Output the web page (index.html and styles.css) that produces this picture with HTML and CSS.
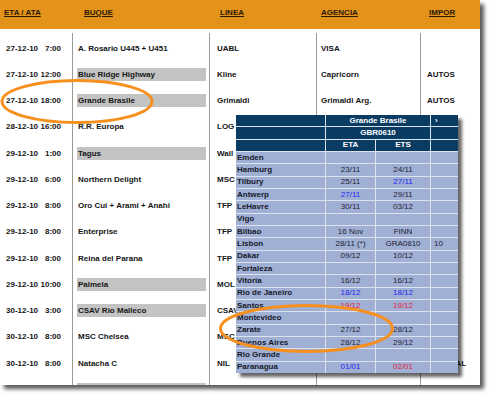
FILE: index.html
```html
<!DOCTYPE html>
<html>
<head>
<meta charset="utf-8">
<link rel="stylesheet" href="styles.css">
</head>
<body>
<div class="page">
  <div class="panel">
    <div class="head">
      <div class="hc w1 h1"><span class="ul">ETA / ATA</span></div>
      <div class="hc w2 h2"><span class="ul">BUQUE</span></div>
      <div class="hc w3 h3"><span class="ul">LINEA</span></div>
      <div class="hc w4 h4"><span class="ul">AGENCIA</span></div>
      <div class="hc w5 h5"><span class="ul">IMPOR</span></div>
    </div>
    <div class="body">
      <div class="col w1 cdate">
        <div class="cell"><span>27-12-10</span><span>7:00</span></div>
        <div class="cell"><span>27-12-10</span><span>12:00</span></div>
        <div class="cell"><span>27-12-10</span><span>18:00</span></div>
        <div class="cell"><span>28-12-10</span><span>16:00</span></div>
        <div class="cell"><span>29-12-10</span><span>1:00</span></div>
        <div class="cell"><span>29-12-10</span><span>6:00</span></div>
        <div class="cell"><span>29-12-10</span><span>8:00</span></div>
        <div class="cell"><span>29-12-10</span><span>8:00</span></div>
        <div class="cell"><span>29-12-10</span><span>8:00</span></div>
        <div class="cell"><span>29-12-10</span><span>10:00</span></div>
        <div class="cell"><span>30-12-10</span><span>3:00</span></div>
        <div class="cell"><span>30-12-10</span><span>8:00</span></div>
        <div class="cell"><span>30-12-10</span><span>8:00</span></div>
        <div class="cell"></div>
      </div>
      <div class="col w2 cship">
        <div class="cell"><span class="nm">A. Rosario U445 + U451</span></div>
        <div class="cell"><span class="nm hl">Blue Ridge Highway</span></div>
        <div class="cell"><span class="nm hl">Grande Brasile</span></div>
        <div class="cell"><span class="nm">R.R. Europa</span></div>
        <div class="cell"><span class="nm hl">Tagus</span></div>
        <div class="cell"><span class="nm">Northern Delight</span></div>
        <div class="cell"><span class="nm">Oro Cui + Arami + Anahi</span></div>
        <div class="cell"><span class="nm">Enterprise</span></div>
        <div class="cell"><span class="nm">Reina del Parana</span></div>
        <div class="cell"><span class="nm hl">Palmela</span></div>
        <div class="cell"><span class="nm hl">CSAV Rio Malleco</span></div>
        <div class="cell"><span class="nm">MSC Chelsea</span></div>
        <div class="cell"><span class="nm">Natacha C</span></div>
        <div class="cell"><span class="nm hl"></span></div>
      </div>
      <div class="col w3 cline">
        <div class="cell">UABL</div>
        <div class="cell">Kline</div>
        <div class="cell">Grimaldi</div>
        <div class="cell">LOG</div>
        <div class="cell">Wall</div>
        <div class="cell">MSC</div>
        <div class="cell">TFP</div>
        <div class="cell">TFP</div>
        <div class="cell">TFP</div>
        <div class="cell">MOL</div>
        <div class="cell">CSAV</div>
        <div class="cell">MSC</div>
        <div class="cell">NIL</div>
        <div class="cell"></div>
      </div>
      <div class="col w4 cagen">
        <div class="cell">VISA</div>
        <div class="cell">Capricorn</div>
        <div class="cell">Grimaldi Arg.</div>
        <div class="cell"></div>
        <div class="cell"></div>
        <div class="cell"></div>
        <div class="cell"></div>
        <div class="cell"></div>
        <div class="cell"></div>
        <div class="cell"></div>
        <div class="cell"></div>
        <div class="cell"></div>
        <div class="cell"></div>
        <div class="cell"></div>
      </div>
      <div class="col w5 cimp">
        <div class="cell"></div>
        <div class="cell">AUTOS</div>
        <div class="cell">AUTOS</div>
        <div class="cell"></div>
        <div class="cell"></div>
        <div class="cell"></div>
        <div class="cell"></div>
        <div class="cell"></div>
        <div class="cell"></div>
        <div class="cell"></div>
        <div class="cell"></div>
        <div class="cell"></div>
        <div class="cell">GENERAL</div>
        <div class="cell"></div>
      </div>
    </div>
  </div>

  <div class="popup">
    <div class="ph"></div><div class="ph span2">Grande Brasile</div><div class="ph arr">&#8250;</div>
    <div class="ph"></div><div class="ph span2">GBR0610</div><div class="ph"></div>
    <div class="ph"></div><div class="ph">ETA</div><div class="ph">ETS</div><div class="ph"></div>

    <div class="pn">Emden</div><div class="pv"></div><div class="pv"></div><div class="pv"></div>
    <div class="pn">Hamburg</div><div class="pv">23/11</div><div class="pv">24/11</div><div class="pv"></div>
    <div class="pn">Tilbury</div><div class="pv">25/11</div><div class="pv blue">27/11</div><div class="pv"></div>
    <div class="pn">Antwerp</div><div class="pv blue">27/11</div><div class="pv">29/11</div><div class="pv"></div>
    <div class="pn">LeHavre</div><div class="pv">30/11</div><div class="pv">03/12</div><div class="pv"></div>
    <div class="pn">Vigo</div><div class="pv"></div><div class="pv"></div><div class="pv"></div>
    <div class="pn">Bilbao</div><div class="pv">16 Nov</div><div class="pv">FINN</div><div class="pv"></div>
    <div class="pn">Lisbon</div><div class="pv">28/11 (*)</div><div class="pv">GRA0810</div><div class="pv left">10</div>
    <div class="pn">Dakar</div><div class="pv">09/12</div><div class="pv">10/12</div><div class="pv"></div>
    <div class="pn">Fortaleza</div><div class="pv"></div><div class="pv"></div><div class="pv"></div>
    <div class="pn">Vitoria</div><div class="pv">16/12</div><div class="pv">16/12</div><div class="pv"></div>
    <div class="pn">Rio de Janeiro</div><div class="pv blue">18/12</div><div class="pv blue">18/12</div><div class="pv"></div>
    <div class="pn">Santos</div><div class="pv red">19/12</div><div class="pv red">19/12</div><div class="pv"></div>
    <div class="pn">Montevideo</div><div class="pv"></div><div class="pv"></div><div class="pv"></div>
    <div class="pn">Zarate</div><div class="pv">27/12</div><div class="pv">28/12</div><div class="pv"></div>
    <div class="pn">Buenos Aires</div><div class="pv">28/12</div><div class="pv">29/12</div><div class="pv"></div>
    <div class="pn">Rio Grande</div><div class="pv"></div><div class="pv"></div><div class="pv"></div>
    <div class="pn">Paranagua</div><div class="pv blue">01/01</div><div class="pv red">02/01</div><div class="pv"></div>
  </div>

  <svg class="marks" width="500" height="400" viewBox="0 0 500 400">
    <ellipse cx="77" cy="101.5" rx="75" ry="21" fill="none" stroke="#F7901E" stroke-width="3"/>
    <ellipse cx="306.5" cy="328.5" rx="86" ry="23" fill="none" stroke="#F7901E" stroke-width="3"/>
  </svg>
</div>
</body>
</html>
```
FILE: styles.css
```css
html, body {
  margin: 0;
  padding: 0;
  background: #ffffff;
}

body {
  font-family: "Liberation Sans", Arial, sans-serif;
}

.page {
  position: relative;
  width: 500px;
  height: 400px;
  overflow: hidden;
  background: #ffffff;
}

.panel {
  width: 480px;
  height: 385px;
  background: #ffffff;
  overflow: hidden;
  box-shadow: 4px 4px 4px rgba(0, 0, 0, 0.65);
}

.head {
  display: flex;
  height: 29px;
  background: #E3921A;
  font-size: 8px;
  font-weight: bold;
  color: #2b1a02;
}

.hc {
  box-sizing: border-box;
  padding-top: 8px;
  line-height: 9px;
}

.ul {
  text-decoration: underline;
}

.w1 { width: 72px; }
.w2 { width: 137px; }
.w3 { width: 107px; }
.w4 { width: 104px; }
.w5 { width: 60px; }

.h1 { padding-left: 4px; }
.h2 { padding-left: 12px; }
.h3 { padding-left: 11px; }
.h4 { padding-left: 5px; }
.h5 { padding-left: 9px; }

.body {
  display: flex;
  margin-top: 4px;
  height: 352px;
  font-size: 8px;
  font-weight: bold;
  color: #151515;
}

.col {
  box-sizing: border-box;
  padding-top: 2px;
  flex: none;
}

.col + .col {
  border-left: 1px solid #9a9a9a;
}

.cell {
  height: 26.25px;
  display: flex;
  align-items: center;
  white-space: nowrap;
  box-sizing: border-box;
}

.cdate .cell {
  justify-content: space-between;
  padding: 0 11px 0 6px;
}

.nm {
  box-sizing: border-box;
  display: flex;
  align-items: center;
  width: 129px;
  height: 13px;
  margin-left: 4px;
  padding-left: 1px;
}

.hl {
  background: #C3C3C3;
}

.cline .cell { padding-left: 7px; }
.cagen .cell { padding-left: 4px; }
.cimp .cell { padding-left: 6px; }

/* popup over the table */
.popup {
  position: absolute;
  left: 236px;
  top: 115px;
  width: 222px;
  height: 258px;
  display: grid;
  grid-template-columns: 89px 49px 54px 27px;
  grid-template-rows: repeat(21, 1fr);
  gap: 1px;
  background: #DDE3EE;
  box-shadow: 4px 4px 3px rgba(0, 0, 0, 0.6);
  font-size: 8px;
  z-index: 2;
}

.popup > div {
  display: flex;
  align-items: center;
  white-space: nowrap;
  overflow: hidden;
  line-height: 1;
}

.ph {
  background: #0A3B63;
  color: #ffffff;
  font-weight: bold;
  justify-content: center;
}

.span2 {
  grid-column: span 2;
}

.ph.arr {
  justify-content: flex-start;
  padding-left: 4px;
  font-size: 8px;
}

.pn {
  background: #A0B0D5;
  color: #15182a;
  font-weight: bold;
  padding-left: 1px;
}

.pv {
  background: #A0B0D5;
  color: #222233;
  justify-content: center;
}

.pv.left {
  justify-content: flex-start;
  padding-left: 3px;
}

.blue { color: #2424F0; }
.red { color: #E8203E; }

.marks {
  position: absolute;
  left: 0;
  top: 0;
  z-index: 3;
  pointer-events: none;
}
```
